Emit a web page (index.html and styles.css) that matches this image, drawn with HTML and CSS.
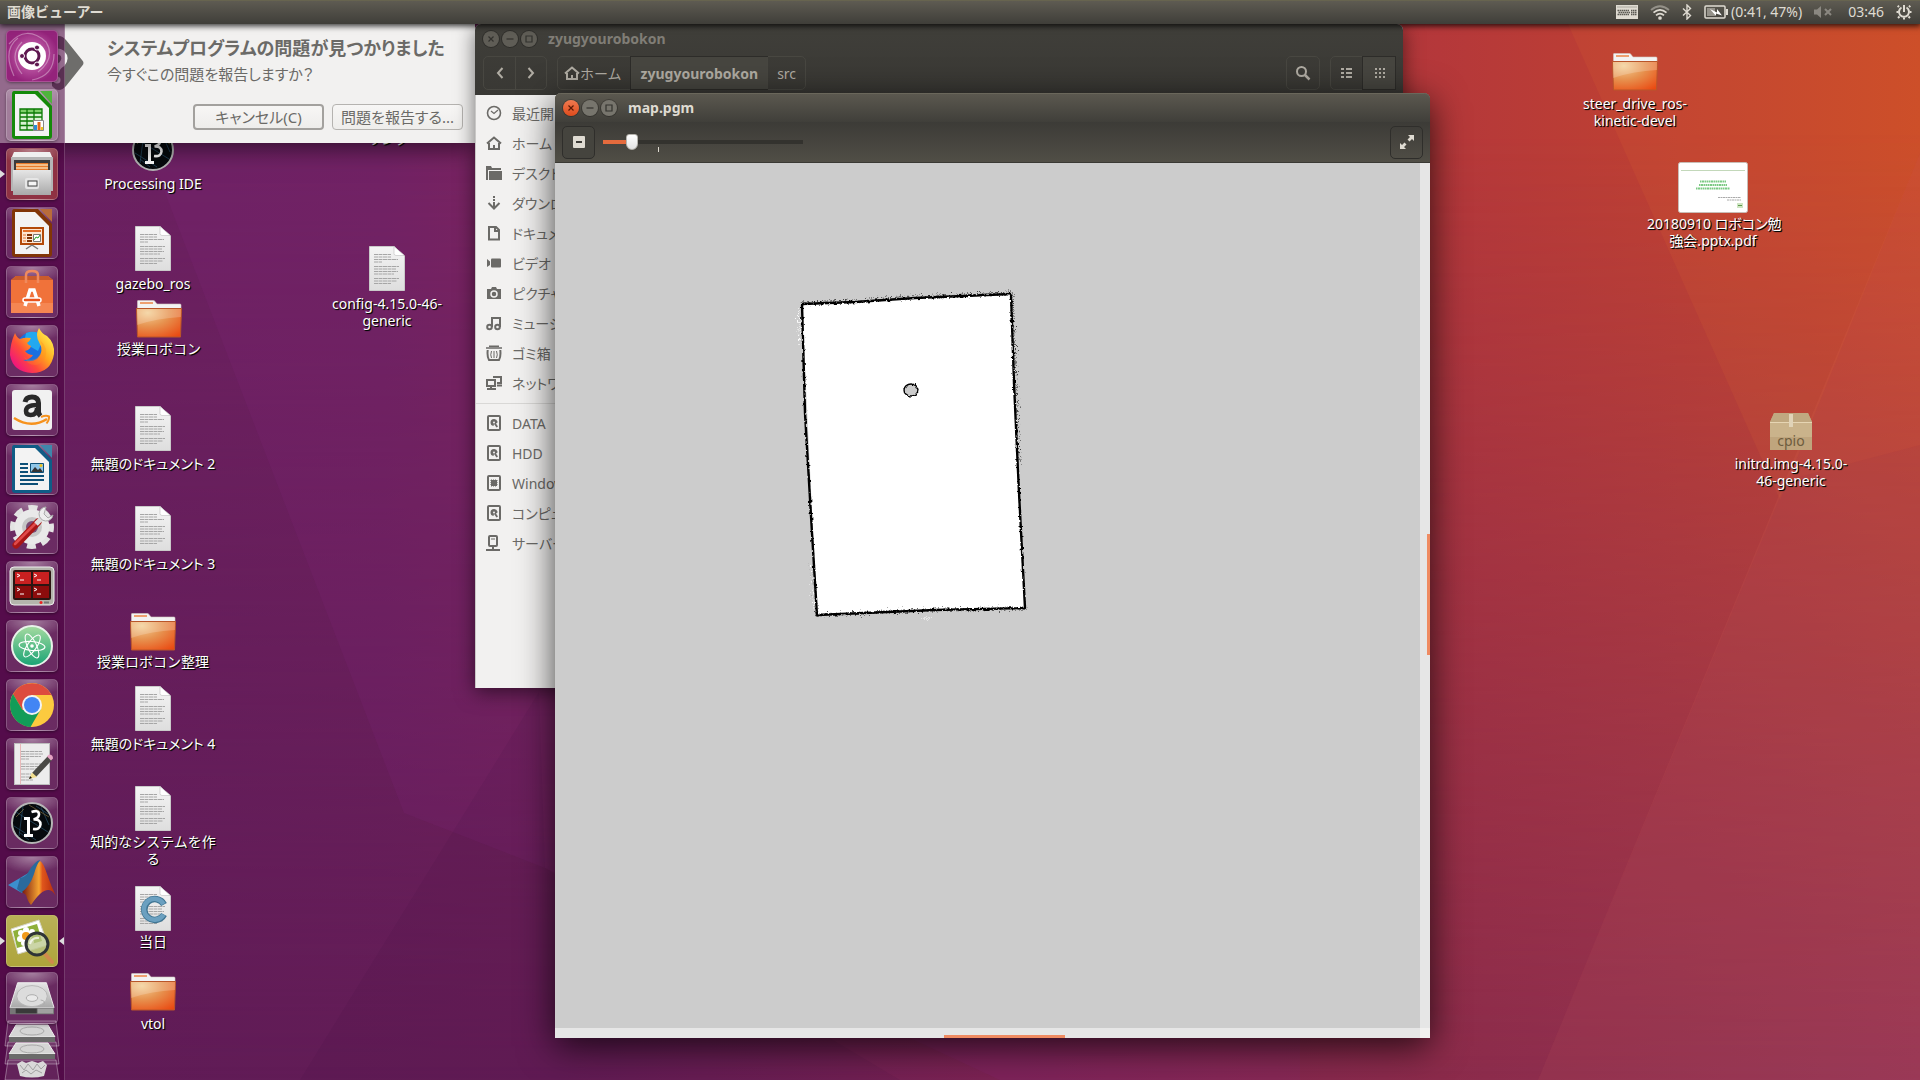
FILE: index.html
```html
<!DOCTYPE html>
<html lang="ja">
<head>
<meta charset="utf-8">
<title>画像ビューアー</title>
<link rel="stylesheet" href="styles.css">
</head>
<body>
<svg class="sprite" aria-hidden="true">
  <defs>
    <linearGradient id="paper" x1="0" y1="0" x2="0" y2="1"><stop offset="0" stop-color="#f4f4f4"/><stop offset="1" stop-color="#dedede"/></linearGradient>
    <radialGradient id="orange" cx=".25" cy=".15" r="1.05"><stop offset="0" stop-color="#f3cf95"/><stop offset=".45" stop-color="#e79350"/><stop offset="1" stop-color="#ea4a12"/></radialGradient>
    <linearGradient id="metal" x1="0" y1="0" x2="0" y2="1"><stop offset="0" stop-color="#e6e6e6"/><stop offset="1" stop-color="#a9a9a9"/></linearGradient>
    <symbol id="doc" viewBox="0 0 36 45">
      <path d="M.5.5H25l10.500 9.500V44.500H.5z" fill="url(#paper)" stroke="#c9c9c9"/>
      <path d="M25 .5v7q0 2 2 2h8.500z" fill="#fff" stroke="#bdbdbd" stroke-width=".6"/>
      <path d="M5 8.500h17M5 11h17M5 13.500h24M5 16h8M5 20.500h25M5 23h22M5 25.500h24M5 28h20M5 32.500h25M5 35h23M5 37.500h17" stroke="#a6a6a6" stroke-dasharray="4 .5"/>
    </symbol>
    <symbol id="folder" viewBox="0 0 46 38">
      <path d="M1.500 1q0-.5.5-.5h15.500q1 0 1.500 1l2 2.500H44q1 0 1 1v8H1.500z" fill="#f3f3f3" stroke="#d5c9c2" stroke-width=".6"/>
      <rect x="4" y="2" width="13" height="2" fill="#eea071"/>
      <path d="M.5 8.500h45L44.500 37h-43z" fill="url(#orange)" stroke="#b9562a"/>
      <path d="M1 9h44v8Q22 18 1 25z" fill="#fff" opacity=".2"/>
    </symbol>
    <symbol id="disk" viewBox="0 0 48 36">
      <path d="M9 1h30l8 26H1z" fill="url(#metal)" stroke="#efefef"/>
      <path d="M1 27h46v7H1z" fill="#777"/><path d="M7 28h22v5H7z" fill="#3a3a3a"/><path d="M30 28h16v5H30z" fill="#a0a0a0"/>
      <ellipse cx="24" cy="15" rx="16" ry="11" fill="#dcdcdc" stroke="#b5b5b5"/><ellipse cx="24" cy="17" rx="6" ry="3.500" fill="#e9e9e9" stroke="#aaa"/>
      <path d="M33 19q6 1 3 5" fill="none" stroke="#aaa"/>
    </symbol>
    <symbol id="processing" viewBox="0 0 42 42">
      <circle cx="21" cy="21" r="20" fill="#060a0d" stroke="#b5b5b5" stroke-width="2"/>
      <path d="M5 10l32 20M12 4l-4 30M30 5l8 18M3 24l22 14M8 30l10 8M25 4l12 8" stroke="#28506a" stroke-width=".7"/><path d="M18 3l20 12M5 15l8-8" stroke="#7d6a3c" stroke-width=".7"/>
      <path d="M13 16.500h4.500V33M13 33.500h9" fill="none" stroke="#fff" stroke-width="3"/>
      <path d="M20.500 10q7.500-2.500 7.500 2.500-.5 4-5.500 5 7-.5 7 5-.5 5.500-7.500 4.500" fill="none" stroke="#fff" stroke-width="2.600"/>
    </symbol>
    <symbol id="drive" viewBox="0 0 16 16">
      <rect x="2" y="1" width="12" height="14" rx="1" fill="none" stroke="currentColor" stroke-width="2"/>
      <path d="M8 4a3.500 3.500 0 0 0-3.500 3.500q0 3 3 3.500l.5-2 2.500 3.500 1.500-1-2-3q2-.5 1.500-2A3.500 3.500 0 0 0 8 4z" fill="currentColor"/><circle cx="8" cy="7.500" r="1" fill="#f2f1f0"/>
    </symbol>
    <symbol id="house" viewBox="0 0 16 16">
      <path d="M1 8.500L8 2.500l7 6M3 8v6h10V8M8 14v-4" fill="none" stroke="currentColor" stroke-width="2"/>
    </symbol>
    <symbol id="w-close" viewBox="0 0 16 16"><path d="M5.500 5.500l5 5M10.500 5.500l-5 5" stroke="currentColor" stroke-width="1.200"/></symbol>
    <symbol id="w-min" viewBox="0 0 16 16"><path d="M4.500 8h7" stroke="currentColor" stroke-width="1.200"/></symbol>
    <symbol id="w-max" viewBox="0 0 16 16"><path d="M5 5h6v6H5z" fill="none" stroke="currentColor" stroke-width="1.200"/></symbol>
  </defs>
</svg>

<header class="panel">
  <span class="panel-title">画像ビューアー</span>
  <div class="indicators">
    <svg width="22" height="14" viewBox="0 0 22 14"><rect width="22" height="14" fill="#dfdbd2"/><path d="M1.500 2h19" stroke="#77746c" stroke-dasharray="1 1"/><path d="M1.500 5.500h12M2.500 7.500h12M1.500 9.500h12M15 5.500h6M15 7.500h6M15 9.500h6" stroke="#5c5a54" stroke-width="1.500" stroke-dasharray="1.500 .5"/></svg>
    <svg width="20" height="16" viewBox="0 0 20 16" fill="none" stroke="#dfdbd2" stroke-width="1.700"><path d="M1 6q9-7.500 18 0" opacity=".45"/><path d="M3.500 8.700q6.500-5.500 13 0M6 11.400q4-3.500 8 0"/><circle cx="10" cy="14" r="1" fill="#dfdbd2"/></svg>
    <svg width="10" height="16" viewBox="0 0 10 16" fill="none" stroke="#dfdbd2" stroke-width="1.400"><path d="M1 4.500l7.500 7L5 15V1l3.500 3.500-7.500 7"/></svg>
    <span class="battery"><svg width="24" height="14" viewBox="0 0 24 14"><rect x="1" y="1" width="20" height="12" rx="1" fill="none" stroke="#dfdbd2" stroke-width="1.500"/><path d="M3 3h8v8H3z" fill="#95928a"/><path d="M22 4h2v6h-2z" fill="#dfdbd2"/><path d="M6 4l7 3.500V4l5 6.500-6-2V11z" fill="#fff"/></svg>(0:41, 47%)</span>
    <svg class="mute" width="18" height="14" viewBox="0 0 18 14"><path d="M0 4.500h3L7 1v12L3 9.500H0z" fill="#8b8881"/><path d="M11 4l6 6M17 4l-6 6" stroke="#8b8881" stroke-width="2"/></svg>
    <time>03:46</time>
    <svg width="16" height="16" viewBox="0 0 16 16" fill="none" stroke="#dfdbd2"><path d="M5.500 3.500a5 5 0 1 0 5 0M8 1v7" stroke-width="2"/><path d="M3 3L1.700 1.700M13 3l1.300-1.300M2.500 8H.5M13.500 8h2M3.500 12.500l-1.500 1.500M12.500 12.500l1.500 1.500M8 13.500v2" stroke-width="2"/></svg>
  </div>
</header>

<main class="workspace">
  <svg class="facets" viewBox="0 24 1920 1056" preserveAspectRatio="none" aria-hidden="true">
    <path d="M100 24L404 813 545 868 1000 1080H1300V24z" fill="#8a2a8a" opacity=".12"/>
    <path d="M539 692L300 1080H900L545 868z" fill="#2a0030" opacity=".06"/>
    <path d="M1568 24L1780 500 1920 153V24z" fill="#ff8a30" opacity=".08"/>
    <path d="M1920 153L1538 1080H1920z" fill="#ff9070" opacity=".08"/>
    <path d="M1920 445L1787 480 1538 1080H1920z" fill="#802050" opacity=".08"/>
  </svg>

  <ul class="desktop">
    <li class="item at-processing"><svg width="42" height="42"><use href="#processing"/></svg><span>Processing IDE</span></li>
    <li class="item at-gazebo"><svg width="36" height="45"><use href="#doc"/></svg><span>gazebo_ros</span></li>
    <li class="item near at-robocon"><svg width="46" height="38"><use href="#folder"/></svg><span>授業ロボコン</span></li>
    <li class="item kana at-doc2"><svg width="36" height="45"><use href="#doc"/></svg><span>無題のドキュメント 2</span></li>
    <li class="item kana at-doc3"><svg width="36" height="45"><use href="#doc"/></svg><span>無題のドキュメント 3</span></li>
    <li class="item near at-seiri"><svg width="46" height="38"><use href="#folder"/></svg><span>授業ロボコン整理</span></li>
    <li class="item kana at-doc4"><svg width="36" height="45"><use href="#doc"/></svg><span>無題のドキュメント 4</span></li>
    <li class="item near at-chiteki"><svg width="36" height="45"><use href="#doc"/></svg><span>知的なシステムを作<br>る</span></li>
    <li class="item near at-toujitsu"><svg width="36" height="45" viewBox="0 0 36 45"><use href="#doc"/><path d="M29 18.500a10.500 10.500 0 1 0 0 10" fill="none" stroke="#3f7593" stroke-width="6.500"/><path d="M28.500 18a10.500 10.500 0 1 0 0 10.500" fill="none" stroke="#6ba0c0" stroke-width="4.500"/></svg><span>当日</span></li>
    <li class="item at-vtol"><svg width="46" height="38"><use href="#folder"/></svg><span>vtol</span></li>
    <li class="item at-link"><span>リンク</span></li>
    <li class="item at-config"><svg width="36" height="45"><use href="#doc"/></svg><span>config-4.15.0-46-<br>generic</span></li>
    <li class="item at-steer"><svg width="46" height="38"><use href="#folder"/></svg><span>steer_drive_ros-<br>kinetic-devel</span></li>
    <li class="item kana near at-pdf"><svg width="70" height="51" viewBox="0 0 70 51"><rect x=".5" y=".5" width="69" height="50" rx="2" fill="#fff" stroke="#c9bdb6"/><path d="M3 8.500h64" stroke="#c3d8ba"/><path d="M22 19.500h26M21 23h28M18 26.500h34" stroke="#7cca84" stroke-width="2" stroke-dasharray="1.500 .5 2 .5"/><path d="M40 35.500h23M49 38h14" stroke="#aaa" stroke-dasharray="2 .5"/><rect x="59" y="41" width="6" height="5" fill="#cfe5c4"/><path d="M60 43.500h4" stroke="#5a9a4a"/></svg><span>20180910 ロボコン勉<br>強会.pptx.pdf</span></li>
    <li class="item at-initrd"><svg width="42" height="38" viewBox="0 0 42 38"><path d="M4 0h34l4 9v28H0V9z" fill="#bfa57d"/><path d="M4 0h34l4 9H0z" fill="#c0a880"/><path d="M0 9h42v15H0z" fill="#d2bc95" opacity=".6"/><path d="M0 9.500h42" stroke="#e6d5b3"/><path d="M19 1h4v13h-4z" fill="#e0d3b8"/><text class="box-text" x="21" y="33" text-anchor="middle">cpio</text></svg><span>initrd.img-4.15.0-<br>46-generic</span></li>
  </ul>

  <section class="dialog">
    <svg class="mark" width="34" height="56" viewBox="0 0 34 56" aria-hidden="true"><path d="M2 5q7-8 14 0l16 20q3 3 0 6L16 51q-7 8-14 0z" fill="#6e6d6b"/><path d="M2 20q4-6 10-2 5 5 0 11-5 3-6 8" fill="none" stroke="#f2f1f0" stroke-width="6"/><circle cx="7" cy="45" r="3.500" fill="#f2f1f0"/></svg>
    <h2>システムプログラムの問題が見つかりました</h2>
    <p>今すぐこの問題を報告しますか？</p>
    <div class="actions"><button class="focused" type="button">キャンセル(C)</button><button type="button">問題を報告する...</button></div>
  </section>

  <section class="files">
    <header class="files-head">
      <div class="titlebar">
        <button class="wbtn" type="button" aria-label="閉じる"><svg><use href="#w-close"/></svg></button><button class="wbtn" type="button" aria-label="最小化"><svg><use href="#w-min"/></svg></button><button class="wbtn" type="button" aria-label="最大化"><svg><use href="#w-max"/></svg></button>
        <h2>zyugyourobokon</h2>
      </div>
      <nav class="files-bar">
        <div class="group nav">
          <button type="button" aria-label="戻る"><svg width="16" height="16" viewBox="0 0 16 16"><path d="M10.500 3L6 8l4.500 5" fill="none" stroke="currentColor" stroke-width="2"/></svg></button>
          <button type="button" aria-label="進む"><svg width="16" height="16" viewBox="0 0 16 16"><path d="M5.500 3L10 8l-4.500 5" fill="none" stroke="currentColor" stroke-width="2"/></svg></button>
        </div>
        <div class="group path">
          <button class="home" type="button"><svg width="16" height="16"><use href="#house"/></svg>ホーム</button>
          <button class="on" type="button">zyugyourobokon</button>
          <button type="button">src</button>
        </div>
        <div class="group view search"><button type="button" aria-label="検索"><svg width="16" height="16" viewBox="0 0 16 16" fill="none" stroke="currentColor"><circle cx="6.500" cy="6.500" r="4.500" stroke-width="2"/><path d="M10 10l4.500 4.500" stroke-width="2.500"/></svg></button></div>
        <div class="group view">
          <button type="button" aria-label="リスト"><svg width="16" height="16" viewBox="0 0 16 16" stroke="currentColor" stroke-width="2"><path d="M2 4h3M2 8h3M2 12h3M7 4h6M7 8h6M7 12h6"/></svg></button>
          <button class="on" type="button" aria-label="アイコン"><svg width="16" height="16" viewBox="0 0 16 16" stroke="currentColor" stroke-width="2" stroke-dasharray="2 2"><path d="M3 4h10M3 8h10M3 12h10"/></svg></button>
        </div>
      </nav>
    </header>
    <ul class="places">
      <li><svg viewBox="0 0 16 16"><circle cx="8" cy="8" r="6.500" fill="none" stroke="currentColor" stroke-width="1.600"/><path d="M5 6l3 2.500L12 5" fill="none" stroke="currentColor" stroke-width="1.200"/></svg>最近開い</li>
      <li><svg><use href="#house"/></svg>ホーム</li>
      <li><svg viewBox="0 0 16 16" fill="currentColor"><path d="M0 1h5l1 2h9v2H2v10H0z"/><path d="M3 6h13v9H3z"/></svg>デスクトップ</li>
      <li><svg viewBox="0 0 16 16" fill="none" stroke="currentColor" stroke-width="2"><path d="M8 1v2M8 4v2M8 7v6M2.500 8L8 13.500 13.500 8"/></svg>ダウンロード</li>
      <li><svg viewBox="0 0 16 16" fill="none" stroke="currentColor" stroke-width="2"><path d="M3 2h7l3 3v9.500H3z"/><path d="M9 2v4h4"/></svg>ドキュメント</li>
      <li><svg viewBox="0 0 16 16" fill="currentColor"><path d="M1 4l3 2.500V10l-3 2z"/><rect x="5" y="3.500" width="10" height="9" rx="1"/></svg>ビデオ</li>
      <li><svg viewBox="0 0 16 16"><path d="M1 4h4l1-2h4l1 2h4v10H1z" fill="currentColor"/><circle cx="8" cy="9" r="3" fill="none" stroke="#f2f1f0" stroke-width="1.500"/></svg>ピクチャー</li>
      <li><svg viewBox="0 0 16 16" fill="none" stroke="currentColor" stroke-width="2"><circle cx="3.500" cy="12" r="2.300"/><circle cx="11.500" cy="12" r="2.300"/><path d="M6 12V3h8v9"/></svg>ミュージック</li>
      <li><svg viewBox="0 0 16 16" fill="none" stroke="currentColor"><path d="M0 3h16M3 1.200h10" stroke-width="1.600"/><path d="M1.700 5q-.7 7 1.300 10h10q2-3 1.300-10" stroke-width="2"/><path d="M5.500 6q-1.500 4 0 7M8 6v7M10.500 6q1.500 4 0 7"/></svg>ゴミ箱</li>
      <li><svg viewBox="0 0 16 16" fill="none" stroke="currentColor" stroke-width="2"><rect x="1" y="5" width="8" height="6"/><path d="M1 14h9M7 2h8v6h-4M11 10.500h5M5 11v3"/></svg>ネットワーク</li>
      <li class="split"><svg><use href="#drive"/></svg>DATA</li>
      <li><svg><use href="#drive"/></svg>HDD</li>
      <li><svg viewBox="0 0 16 16"><rect x="2" y="1" width="12" height="14" rx="1" fill="none" stroke="currentColor" stroke-width="2"/><rect x="5" y="5" width="6" height="6" fill="currentColor"/><path d="M4.500 5.500h7M4.500 7.500h7M4.500 9.500h7M5.500 4.500v7M7.500 4.500v7M9.500 4.500v7" stroke="currentColor"/></svg>Windows</li>
      <li><svg><use href="#drive"/></svg>コンピュータ</li>
      <li><svg viewBox="0 0 16 16" fill="none" stroke="currentColor" stroke-width="2"><rect x="3" y="1" width="8" height="10" rx="1"/><path d="M7 11v4M0 15h14"/><path d="M5 4h4" stroke-width="1"/></svg>サーバー</li>
    </ul>
  </section>

  <section class="viewer">
    <header class="viewer-head">
      <div class="titlebar">
        <button class="wbtn close" type="button" aria-label="閉じる"><svg><use href="#w-close"/></svg></button><button class="wbtn" type="button" aria-label="最小化"><svg><use href="#w-min"/></svg></button><button class="wbtn" type="button" aria-label="最大化"><svg><use href="#w-max"/></svg></button>
        <h2>map.pgm</h2>
      </div>
      <div class="viewer-bar">
        <button class="tool" type="button" aria-label="縮小"><svg width="16" height="16" viewBox="0 0 16 16"><rect x="2" y="2" width="12" height="12" rx="1" fill="#dfdbd2"/><path d="M5 8h6" stroke="#3c3b37" stroke-width="2"/></svg></button>
        <div class="zoom"><input type="range" min="0" max="100" value="12" aria-label="ズーム"><i class="tick"></i></div>
        <button class="tool flat" type="button" aria-label="全画面"><svg width="16" height="16" viewBox="0 0 16 16" fill="#dfdbd2"><path d="M9 1h6v6l-2-2-2.500 2.500-2-2L11 3z"/><path d="M7 15H1V9l2 2 2.500-2.500 2 2L5 13z"/></svg></button>
      </div>
    </header>
    <div class="image">
      <svg class="map" viewBox="240 120 240 340" aria-label="map">
        <defs>
          <filter id="rough" x="-10%" y="-10%" width="120%" height="120%"><feTurbulence type="fractalNoise" baseFrequency=".3" numOctaves="2" seed="4"/><feDisplacementMap in="SourceGraphic" scale="3" xChannelSelector="R" yChannelSelector="G"/></filter>
          <filter id="fray" x="-10%" y="-10%" width="120%" height="120%"><feTurbulence type="fractalNoise" baseFrequency=".9" numOctaves="2" seed="8"/><feDisplacementMap in="SourceGraphic" scale="12" xChannelSelector="R" yChannelSelector="G"/></filter>
        </defs>
        <path d="M247 141L456 131 470 445 262 451z" fill="#fff"/>
        <g fill="none" stroke="#000" filter="url(#fray)" stroke-width=".7">
          <path d="M246 140L300 138 360 134 457 130 461 220 464 300M256 400l5 52 50-2 60-3 100-1"/>
        </g>
        <path d="M244 145l2 40M256 400l4 46M368 455h6" stroke="#fff" fill="none" filter="url(#fray)" stroke-width="1"/>
        <g filter="url(#rough)" fill="none" stroke="#000" stroke-width="2.400" stroke-linejoin="round">
          <path d="M247 141L300 139 360 135 456 131 459 220 464 330 470 445 380 447 262 452 257 370 250 250z"/>
        </g>
        <ellipse cx="356" cy="227" rx="7" ry="6" fill="#ccc" stroke="#000" stroke-width="1.500" filter="url(#rough)"/>
      </svg>
    </div>
    <div class="vscroll"><i></i></div>
    <div class="hscroll"><i></i></div>
    <div class="corner"></div>
  </section>

  <nav class="launcher">
    <a class="tile dash" href="#" aria-label="Dash"><svg viewBox="0 0 52 52"><g fill="none" stroke="#fff" opacity=".35" stroke-width="1.200"><path d="M3 14Q20-6 40 12q10 16-8 30M8 46Q-4 20 12 8M26 50q22-4 22-26M16 12q-14 14 0 32"/></g><circle cx="26" cy="26" r="14" fill="#fff"/><circle cx="26" cy="26" r="7" fill="none" stroke="#5e1750" stroke-width="3"/><g fill="#5e1750" stroke="#fff" stroke-width="1"><circle cx="16" cy="26" r="2.500"/><circle cx="31" cy="17.500" r="2.500"/><circle cx="31" cy="34.500" r="2.500"/></g></svg></a>
    <a class="tile" href="#" aria-label="Calc"><svg viewBox="0 0 52 52"><path d="M8 2h24l14 15v30q0 3-3 3H9q-3 0-3-3V5q0-3 2-3z" fill="#158a0a"/><path d="M34 2h12v13z" fill="#4fb43c"/><path d="M9 5h20l14 14v28H9z" fill="#f3f3f3"/><path d="M14 20h22v21H14z" fill="#d9f2d2"/><path d="M14 20h22v4H14z" fill="#7ed069"/><path d="M14 24h22M14 28h22M14 32h22M14 36.500h22M21 20v21M28 20v21M14 20h22v21H14z" stroke="#0b7a05" fill="none" stroke-width="1.300"/><path d="M27.500 31.500h10v10h-10z" fill="#fff" stroke="#888"/><path d="M28 36h3v5h-3z" fill="#2d8fd5"/><path d="M31.500 33h3v8h-3z" fill="#e0661c"/><path d="M35 38h2v3h-2z" fill="#edc21c"/></svg></a>
    <a class="tile red run" href="#" aria-label="Files"><svg viewBox="0 0 52 52"><path d="M8 4h36l3 7H5z" fill="#f0f0f0"/><path d="M5 9h42v34H5z" fill="#b5b5b5"/><path d="M8 12h36v14H8z" fill="#3c3c3c"/><path d="M10 15h32v9H10z" fill="#e77b2a"/><path d="M10 17h32M10 20h32" stroke="#f9d6a8" stroke-width="1.500"/><path d="M7 22h38v25H7z" fill="url(#metal)"/><rect x="20" y="31" width="12" height="9" rx="1" fill="#ddd" stroke="#e6e6e6" stroke-width="2"/><rect x="22" y="33" width="9" height="5" fill="#f5f5f5" stroke="#444"/></svg></a>
    <a class="tile" href="#" aria-label="Impress"><svg viewBox="0 0 52 52"><path d="M8 2h24l14 15v30q0 3-3 3H9q-3 0-3-3V5q0-3 2-3z" fill="#813507"/><path d="M34 2h12v13z" fill="#b96b3b"/><path d="M9 5h20l14 14v28H9z" fill="#f3f3f3"/><path d="M15 21h22v16H15z" fill="#fde6d2" stroke="#b34908" stroke-width="2"/><path d="M17 24h18" stroke="#e2702a" stroke-width="2"/><path d="M17 28h3M17 31h3M17 34h3" stroke="#e2702a"/><path d="M21 28h5M21 31h5M21 34h5" stroke="#813507" stroke-width="2"/><path d="M27.500 27.500h7v7h-7z" fill="#fff" stroke="#777"/><path d="M28 33l2-3 2 1 2-3" fill="none" stroke="#27a22a"/><path d="M26 38l-6 4M26 38l6 4" stroke="#777" stroke-width="1.500"/></svg></a>
    <a class="tile" href="#" aria-label="Software"><svg viewBox="0 0 52 52"><path d="M5 14l5-4h32l5 4v33H5z" fill="#f0723a"/><path d="M5 14l5-4h32l5 4z" fill="#c95b2c"/><path d="M5 37h42v10H5z" fill="#f58652"/><path d="M20 17V9q0-4 6-4t6 4v8" fill="none" stroke="#f08a5d" stroke-width="2.500"/><path d="M19 40l5-16h4l5 16" fill="none" stroke="#fff" stroke-width="3.500"/><rect x="17" y="32" width="18" height="4" rx="2" fill="#e8541e" stroke="#fff" stroke-width="1.500"/></svg></a>
    <a class="tile" href="#" aria-label="Firefox"><svg viewBox="0 0 52 52"><defs><linearGradient id="fx" x1=".9" y1=".1" x2=".1" y2=".8"><stop offset="0" stop-color="#fff14f"/><stop offset=".4" stop-color="#ffa51e"/><stop offset=".7" stop-color="#ff4a3a"/><stop offset="1" stop-color="#f0187a"/></linearGradient></defs><circle cx="27" cy="24" r="17" fill="#1a6fe0"/><path d="M20 8q10-4 18 4l-6 14-14-8z" fill="#22a8ef"/><path d="M9 8q2 5 5 6 5-2 11-1-1 3-4 5 1 2 4 3-1 4-6 5 3 4 8 4-3 5-10 5 7 3 14-1 8-7 2-17-4-7 0-14 2 5 8 8 8 7 7 18-3 19-22 19Q7 47 4 30 4 19 9 8z" fill="url(#fx)"/><path d="M18 32q7 6 14 0 7-7 2-17 9 8 5 18-7 11-17 5z" fill="#ff8a1e" opacity=".3"/></svg></a>
    <a class="tile" href="#" aria-label="Amazon"><svg viewBox="0 0 52 52"><rect x="6" y="6" width="40" height="40" rx="3" fill="#f1f1f1"/><path d="M19 18q1-5 7-5 6.500 0 6.500 6v9q0 2 2 4" fill="none" stroke="#2a2a2a" stroke-width="5"/><path d="M31 21q-11 0-11 6 0 4 4.500 4 6.500 0 6.500-7" fill="none" stroke="#2a2a2a" stroke-width="4.500"/><path d="M8 34q17 11 33 1" fill="none" stroke="#f6921d" stroke-width="2.500"/><path d="M35 33q5-2 8-.5.500 3-2.500 7" fill="none" stroke="#f6921d" stroke-width="2"/></svg></a>
    <a class="tile" href="#" aria-label="Writer"><svg viewBox="0 0 52 52"><path d="M8 2h24l14 15v30q0 3-3 3H9q-3 0-3-3V5q0-3 2-3z" fill="#0f5c86"/><path d="M34 2h12v13z" fill="#3f86ab"/><path d="M9 5h20l14 14v28H9z" fill="#f3f3f3"/><path d="M14 21h8M14 25h8M14 29h8M14 33h24M14 37h24M14 41h18" stroke="#0d5078" stroke-width="2"/><path d="M24.500 20.500h13v9h-13z" fill="#8fc6e8" stroke="#0d5078"/><path d="M25 29l4-5 3 3 2-2 3 4z" fill="#333"/><circle cx="35" cy="22.500" r="1.500" fill="#edc21c"/></svg></a>
    <a class="tile" href="#" aria-label="Settings"><svg viewBox="0 0 52 52"><circle cx="26" cy="25" r="19" fill="none" stroke="#e3e3e3" stroke-width="6" stroke-dasharray="8.900 6" stroke-dashoffset="4"/><circle cx="26" cy="25" r="13" fill="none" stroke="#e9e9e9" stroke-width="9"/><circle cx="26" cy="25" r="10" fill="#c6c6c6"/><circle cx="26" cy="25" r="6" fill="#7b4a74"/><path d="M10 43L32 20" stroke="#a91616" stroke-width="7" stroke-linecap="round"/><path d="M9 42L31 20" stroke="#e04a4a" stroke-width="2.500" stroke-linecap="round"/><path d="M30 22l8-8" stroke="#ddd" stroke-width="5"/><path d="M40 5a7 7 0 1 0 7 8l-5 3-4-4z" fill="#eee" stroke="#aaa"/></svg></a>
    <a class="tile" href="#" aria-label="Terminator"><svg viewBox="0 0 52 52"><rect x="4" y="6" width="44" height="38" rx="4" fill="#b4b4ac" stroke="#eee"/><rect x="7" y="9" width="38" height="30" rx="2" fill="#2c1512"/><path d="M9 11h16v12H9zM27 11h16v12H27z" fill="#c92020"/><path d="M9 25h16v12H9zM27 25h16v12H27z" fill="#8c0c0c"/><path d="M11 13l3 1.500-3 1.500M14 19h4M28 13l3 1.500-3 1.500M31 19h4M11 27l3 1.500-3 1.500M14 33h4M28 27l3 1.500-3 1.500M31 33h4" stroke="#fff" fill="none"/><circle cx="35" cy="41.500" r="1.500" fill="#e22"/><path d="M38 41.500h5" stroke="#777" stroke-width="2"/></svg></a>
    <a class="tile" href="#" aria-label="Atom"><svg viewBox="0 0 52 52"><defs><linearGradient id="at" x1="0" y1="0" x2="0" y2="1"><stop offset="0" stop-color="#a5dba0"/><stop offset="1" stop-color="#18a374"/></linearGradient></defs><circle cx="26" cy="26" r="20" fill="url(#at)" stroke="#e9f3ea" stroke-width="2"/><g fill="none" stroke="#fff" stroke-width="1.100"><ellipse cx="26" cy="26" rx="13" ry="4.500" transform="rotate(5 26 26)"/><ellipse cx="26" cy="26" rx="13" ry="4.500" transform="rotate(65 26 26)"/><ellipse cx="26" cy="26" rx="13" ry="4.500" transform="rotate(125 26 26)"/></g><circle cx="26" cy="26" r="1.800" fill="#fff"/></svg></a>
    <a class="tile" href="#" aria-label="Chrome"><svg viewBox="0 0 52 52"><circle cx="26" cy="26" r="22" fill="#fcca3f"/><path d="M26 16h19.500A22 22 0 0 0 7 15l9.500 16z" fill="#dd4b3e"/><path d="M7 15a22 22 0 0 0 17.500 33L35 30 16.500 31z" fill="#129c58"/><circle cx="26" cy="26" r="10" fill="#f3f3f3"/><circle cx="26" cy="26" r="8" fill="#4285f4"/></svg></a>
    <a class="tile" href="#" aria-label="gedit"><svg viewBox="0 0 52 52"><rect x="8.500" y="5.500" width="35" height="41" fill="#ececec" stroke="#bdbdbd"/><path d="M14.500 6v40" stroke="#e8b9b9"/><path d="M15 13.500h21M15 16h22M15 18.500h20M15 21h8M15 26h20M15 28.500h18M15 31h16M15 36h10M15 39h8M15 42h12" stroke="#a8a8a8" stroke-dasharray="4 .5"/><path d="M26 35L42 18l4 4-16 17z" fill="#4a4a46"/><path d="M41 18.500l2-2q4 0 4 4l-2 2z" fill="#e6a3c4"/><path d="M26 34.500l5 4.500-8 2z" fill="#f0dd8c"/><path d="M23 41l1-3 2 2z" fill="#111"/></svg></a>
    <a class="tile" href="#" aria-label="Processing"><svg viewBox="0 0 52 52"><use href="#processing" x="5" y="5" width="42" height="42"/></svg></a>
    <a class="tile" href="#" aria-label="MATLAB"><svg viewBox="0 0 52 52"><defs><linearGradient id="ml"><stop offset="0" stop-color="#7a1810"/><stop offset=".5" stop-color="#f6a431"/><stop offset=".6" stop-color="#e0561c"/><stop offset="1" stop-color="#b0280c"/></linearGradient></defs><path d="M2 29l12-7 10-6 5 4-13 17z" fill="#3c8fcd"/><path d="M14 22q6-1 9-7 6-10 11-11L25 30l-9 7-5-4z" fill="#2a6a9c"/><path d="M34 5q3 1 7 13t9 22q-4-7-8-6-7 0-17 15-3-3-5-10l-4-3q8-6 12-18 3-11 6-13z" fill="url(#ml)"/></svg></a>
    <a class="tile olive run active" href="#" aria-label="画像ビューアー"><svg viewBox="0 0 52 52"><path d="M5 14l28-9 9 25-30 9z" fill="#fff" stroke="#d4d4c4"/><path d="M7 16l24-7 5 17-25 7z" fill="#8fb03a"/><g fill="#fff"><circle cx="20" cy="15" r="3"/><circle cx="26" cy="17" r="3"/><circle cx="15" cy="18" r="3"/><circle cx="14" cy="24" r="3"/><circle cx="18" cy="28" r="3"/><circle cx="25" cy="27" r="3"/><circle cx="20" cy="21" r="6"/></g><circle cx="20" cy="21" r="4" fill="#f19a1a"/><path d="M39 39l7 8" stroke="#d08a4c" stroke-width="4" stroke-linecap="round"/><circle cx="31" cy="29" r="11" fill="#b9c789" fill-opacity=".75" stroke="#2f3436" stroke-width="3"/><path d="M24 29q2-7 9-6" stroke="#fff" stroke-width="2" fill="none" opacity=".7"/></svg></a>
    <a class="tile disk" href="#" aria-label="ディスク"><svg viewBox="0 0 52 52"><use href="#disk" x="3" y="9" width="46" height="36"/></svg></a>
    <svg class="stack" viewBox="0 0 64 60" aria-hidden="true">
      <g fill="#fff" fill-opacity=".1" stroke="#fff" stroke-opacity=".35"><path d="M8 1h48l3 25H5z"/><path d="M8 22h48l3 22H5z"/><path d="M8 40h48l3 20H5z"/></g>
      <g><path d="M16 5h32l7 12H9z" fill="#d5d5d5" stroke="#eee"/><path d="M9 17h46v5H9z" fill="#6a6a6a"/><ellipse cx="32" cy="11" rx="12" ry="4" fill="none" stroke="#aaa"/></g>
      <g><path d="M16 23h32l7 11H9z" fill="#d5d5d5" stroke="#eee"/><path d="M9 34h46v5H9z" fill="#6a6a6a"/><ellipse cx="32" cy="29" rx="12" ry="4" fill="none" stroke="#aaa"/></g>
      <path d="M17 44l5-3 4 2 6-2 6 2 5-2 4 4-3 11q-12 3-24 0z" fill="#d9d9d9"/><path d="M20 45l4 5 4-6 5 6 4-6 4 5 4-4M22 53l4-3 5 4 5-4 6 3" fill="none" stroke="#a2a2a2"/>
    </svg>
  </nav>
</main>
</body>
</html>
```
FILE: styles.css
```css
* { box-sizing: border-box; }

body {
  margin: 0;
  min-height: 100vh;
  display: flex;
  flex-direction: column;
  overflow: hidden;
  font: 14px/17px "Noto Sans", "Noto Sans CJK JP", sans-serif;
  color: #6b6a67;
}

h2, p, ul { margin: 0; padding: 0; list-style: none; }

button {
  font: inherit;
  font-feature-settings: inherit;
  color: inherit;
  padding: 0;
  border: 0;
  background: none;
  display: flex;
  align-items: center;
  justify-content: center;
}

.sprite { position: absolute; width: 0; height: 0; }

/* proportional kana */
.kana, .dialog, .places { font-feature-settings: "palt"; }

/* top panel */
.panel {
  position: relative;
  z-index: 5;
  height: 24px;
  display: flex;
  align-items: center;
  justify-content: space-between;
  padding: 0 8px 2px 7px;
  background: linear-gradient(#5e5b52, #3f3e39);
  border-top: 1px solid #67644f;
  box-shadow: 0 1px 6px 1px rgba(0, 0, 0, .8);
  color: #dfdbd2;
}
.panel-title { font-weight: 700; }
.indicators { display: flex; align-items: center; gap: 12px; }
.battery { display: flex; align-items: center; gap: 3px; }
.mute { margin-right: 4px; }

/* workspace and wallpaper */
.workspace {
  position: relative;
  flex: 1;
  display: flex;
  background: linear-gradient(90deg, #5f1b57 0, #641d56 29%, #7b2353 52%, #8b2b4b 75%, #953556 100%);
}
.workspace::before {
  content: "";
  position: absolute;
  inset: 0;
  background: linear-gradient(90deg, #6a2062 0, #6f2260 20%, #a5343f 60%, #b5383a 75%, #c94a29 100%);
  -webkit-mask-image: linear-gradient(#000 10%, transparent);
  mask-image: linear-gradient(#000 10%, transparent);
}
.facets { position: absolute; inset: 0; width: 100%; height: 100%; }

/* desktop icons */
.desktop { position: absolute; inset: 0; }
.item {
  position: absolute;
  width: 132px;
  padding-top: 48px;
  text-align: center;
  color: #fff;
  text-shadow: 1px 1px 1px #000, 1px 1px 0 #222;
}
.item svg { position: absolute; bottom: calc(100% - 48px); left: 0; right: 0; margin: 0 auto; }
.item span { display: block; padding-top: 4px; white-space: nowrap; }
.near span { padding-top: 2px; }
.box-text { font: 14px "Noto Sans", sans-serif; fill: #6e5c3d; text-shadow: none; }
.at-processing { left: 87px; top: 99px; }
.at-gazebo { left: 87px; top: 199px; }
.at-robocon { left: 93px; top: 266px; }
.at-doc2 { left: 87px; top: 379px; }
.at-doc3 { left: 87px; top: 479px; }
.at-seiri { left: 87px; top: 579px; }
.at-doc4 { left: 87px; top: 659px; }
.at-chiteki { left: 87px; top: 759px; }
.at-toujitsu { left: 87px; top: 859px; }
.at-vtol { left: 87px; top: 939px; }
.at-link { left: 322px; top: 54px; }
.at-config { left: 321px; top: 219px; }
.at-steer { right: 219px; top: 19px; }
.at-pdf { right: 141px; top: 141px; }
.at-initrd { right: 63px; top: 379px; }

/* crash report dialog */
.dialog {
  position: absolute;
  left: 0;
  top: 0;
  width: 475px;
  padding: 13px 12px 13px 107px;
  background: #f2f1f0;
  box-shadow: 0 4px 24px rgba(0, 0, 0, .6);
}
.dialog h2 { font-size: 18px; line-height: 22px; white-space: nowrap; }
.dialog p { margin-top: 5px; font-size: 15px; line-height: 20px; }
.mark { position: absolute; left: 50px; top: 11px; }
.actions { display: flex; justify-content: flex-end; gap: 8px; margin-top: 20px; font-size: 15px; }
.actions button {
  width: 131px;
  height: 26px;
  border: 1px solid #b5b3b0;
  border-radius: 4px;
  background: linear-gradient(#f7f6f5, #eeedeb);
}
.actions .focused { border: 2px solid #a3a19e; }

/* shared window title bar */
.titlebar { display: flex; align-items: center; gap: 3px; }
.titlebar h2 { margin-left: 8px; font-size: 14px; line-height: 17px; }
.wbtn {
  width: 16px;
  height: 16px;
  border-radius: 50%;
  background: #5f5d56;
  color: #33322e;
  box-shadow: 0 0 0 1px rgba(0, 0, 0, .25);
}
.wbtn svg { width: 16px; height: 16px; }

/* file manager */
.files {
  position: absolute;
  left: 475px;
  right: 517px;
  top: 0;
  height: 664px;
  border-radius: 6px 6px 0 0;
  background: #f2f1f0;
  box-shadow: 0 4px 20px rgba(0, 0, 0, .55);
}
.files-head {
  height: 71px;
  padding: 6px 7px 0 8px;
  border-radius: 6px 6px 0 0;
  background: linear-gradient(#403f3a, #393834);
}
.files-head .titlebar { height: 17px; color: #807d76; }
.files-bar { display: flex; gap: 10px; margin-top: 9px; color: #b1ada4; }
.group { display: flex; height: 34px; border: 1px solid #484741; border-radius: 5px; }
.group button { border-left: 1px solid #484741; }
.group button:first-child { border-left: 0; }
.group .on { background: #474640; font-weight: 700; box-shadow: 0 0 0 1px #2d2c29; }
.nav button { width: 31px; }
.view button { width: 32px; }
.path button { padding: 0 9px; }
.path .home { padding: 0 9px 0 6px; }
.search { margin-left: auto; }
.places { padding-top: 3px; border-left: 1px solid #c9c8c6; height: 593px; }
.places li { display: flex; align-items: center; gap: 10px; height: 30px; padding-left: 10px; white-space: nowrap; }
.places svg { width: 16px; height: 16px; }
.places .split { height: 40px; padding-top: 10px; background: linear-gradient(#d9d8d6, #d9d8d6) 0 5px / 100% 1px no-repeat; }

/* image viewer */
.viewer {
  position: absolute;
  left: 555px;
  right: 490px;
  top: 69px;
  bottom: 42px;
  display: grid;
  grid-template: auto 1fr 10px / 1fr 10px;
  border-radius: 6px 6px 0 0;
  background: #ccc;
  box-shadow: 0 8px 36px rgba(0, 0, 0, .75);
}
.viewer-head { grid-column: 1 / 3; border-radius: 6px 6px 0 0; background: #3c3b37; color: #dfdbd2; }
.viewer-head .titlebar { height: 29px; padding: 0 0 1px 8px; border-radius: 6px 6px 0 0; background: linear-gradient(#5b584f, #403f3a); border-top: 1px solid #6a675b; }
.viewer .wbtn { background: #77756d; }
.viewer .close { background: linear-gradient(#f07a50, #df4b1c); color: #5a1a06; }
.viewer-bar {
  display: flex;
  align-items: center;
  gap: 8px;
  height: 41px;
  padding: 0 7px;
  background: linear-gradient(#3c3b37, #504e46);
  border-bottom: 1px solid #3a3934;
}
.tool { width: 33px; height: 33px; border: 1px solid #2f2e2b; border-radius: 5px; background: #45443e; }
.flat { background: none; }
.zoom { position: relative; flex: 1; display: flex; }
.zoom input {
  -webkit-appearance: none;
  appearance: none;
  width: 200px;
  height: 16px;
  margin: 0;
  background: linear-gradient(90deg, #e56b3d 26px, #33322e 26px) 0 6px / 100% 4px no-repeat;
}
.zoom input::-webkit-slider-thumb {
  -webkit-appearance: none;
  width: 12px;
  height: 16px;
  border-radius: 3px 3px 6px 6px;
  background: linear-gradient(#fff, #e3e3e3);
  border: 1px solid #b5b3ad;
}
.tick { position: absolute; left: 55px; top: 13px; width: 1px; height: 5px; background: #dfdbd2; }
.image { overflow: hidden; padding: 120px 0 0 240px; }
.map { display: block; width: 240px; height: 340px; }
.vscroll, .hscroll { display: flex; align-items: flex-end; background: #e6e6e6; }
.vscroll { flex-direction: column; }
.vscroll i { width: 3px; height: 121px; margin-top: 371px; background: #ef8b62; }
.hscroll i { width: 121px; height: 3px; margin-left: 389px; background: #ef8b62; }
.corner { background: #f2f1f0; }

/* launcher */
.launcher {
  position: relative;
  z-index: 3;
  width: 65px;
  display: flex;
  flex-direction: column;
  gap: 7px;
  padding: 6px 0 0 6px;
  background: rgba(74, 0, 62, .56);
  border-right: 1px solid rgba(255, 255, 255, .2);
}
.tile {
  position: relative;
  width: 52px;
  height: 52px;
  flex: none;
  border: 1px solid rgba(255, 255, 255, .2);
  border-radius: 5px;
  background: radial-gradient(ellipse 34px 16px at 50% 0, rgba(255, 255, 255, .4), transparent), rgba(255, 255, 255, .13);
  box-shadow: 0 1px 3px rgba(0, 0, 0, .4);
}
.tile > svg { display: block; width: 52px; height: 52px; margin: -1px; }
.dash { background: radial-gradient(circle, #d77abf, #94237b 75%); }
.red { background-color: rgba(190, 80, 60, .55); }
.olive { background: linear-gradient(#b9b157, #aea43b); }
.run::before, .active::after { content: ""; position: absolute; top: 21px; border: 4px solid transparent; }
.run::before { left: -7px; border-left: 5px solid #ddd; border-right: 0; }
.active::after { right: -7px; border-right: 5px solid #ddd; border-left: 0; }
.disk { margin-top: -2px; }
.stack { width: 64px; height: 60px; flex: none; margin: -11px 0 0 -6px; }
```
